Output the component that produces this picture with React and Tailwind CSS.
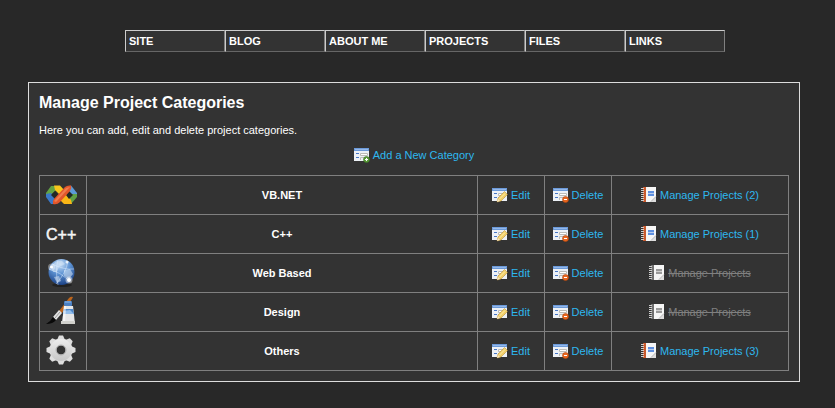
import React from "react";

const navItems = ["SITE", "BLOG", "ABOUT ME", "PROJECTS", "FILES", "LINKS"];

function VbIcon() {
  return (
    <svg width="32" height="32" viewBox="0 0 32 32" className="block">
      <path d="M5 7 H9 L11 10 L5 16 L0 16 V14 Z" fill="#63a345" />
      <path d="M0 15 L5 14 L11 20 L9 25 H5 L0 18 Z" fill="#3a78c8" />
      <path d="M8 6.500 H14 L19 12 L15 17 L9 11 Z" fill="#f8c61c" />
      <path d="M25 6.500 L31 14 V17 L27 17 L20 10 Z" fill="#5b9ad8" />
      <path d="M31 15 V18 L25 25 L20 21 L26 15 Z" fill="#5fa046" />
      <path d="M17 17 L20 15 L25 21 L26 25 H18 L13 20 Z" fill="#f9b616" />
      <path d="M5 16 L9 12 L12 16 L9 20 Z M20 16 L23 12 L27 16 L23 20 Z" fill="#232825" />
      <path d="M7 25 Q6 22 8 20 L19 8 Q21 6 25 6.500 Q26 9 24 12 L14 23 Q11 26 7 25 Z" fill="#e2562b" />
      <path d="M8 22 L20 9 L24 8 L10 23 Z" fill="#ef7b4e" />
    </svg>
  );
}

function CppIcon() {
  return (
    <svg width="32" height="32" viewBox="0 0 32 32" className="block">
      <text x="0" y="22" fontFamily="Liberation Sans, Arial, sans-serif" fontSize="16" fill="#f4f4f4" stroke="#f4f4f4" strokeWidth="0.5">C++</text>
    </svg>
  );
}

function GlobeIcon() {
  return (
    <svg width="32" height="32" viewBox="0 0 32 32" className="block">
      <defs>
        <radialGradient id="globe" cx="0.45" cy="0.2" r="0.85">
          <stop offset="0" stopColor="#c4dcf5" />
          <stop offset="0.45" stopColor="#5d92d2" />
          <stop offset="1" stopColor="#14397e" />
        </radialGradient>
      </defs>
      <ellipse cx="16" cy="28" rx="10" ry="2" fill="#222" />
      <circle cx="15.500" cy="15" r="13" fill="url(#globe)" />
      <path d="M5 9 Q10 3 16 4 L19 7 L13 10 L11 15 L7 15 Z M18 13 L24 12 L27 17 L23 22 L18 19 Z M8 20 L13 19 L15 24 L11 26 Z" fill="#d5e5f6" opacity="0.55" />
      <path d="M3 12 Q14 15 24 24 M6 7 Q18 13 28 12 M12 3 Q9 14 12 28 M22 4 Q20 16 10 27" fill="none" stroke="#e0efff" strokeWidth="0.6" opacity="0.8" />
      <circle cx="5.500" cy="10" r="3.500" fill="#fff" opacity="0.35" />
      <circle cx="5.500" cy="10" r="1.500" fill="#fff" />
      <circle cx="23" cy="23" r="3.500" fill="#fff" opacity="0.45" />
      <circle cx="23" cy="23" r="2" fill="#fff" />
      <circle cx="21" cy="5" r="1.500" fill="#fff" opacity="0.8" />
    </svg>
  );
}

function DesignIcon() {
  return (
    <svg width="32" height="32" viewBox="0 0 32 32" className="block">
      <path d="M13 15 L23 2 Q25 0 27 1 L26 3 L16 17 Z" fill="#bd651c" />
      <path d="M7 21 L13 14 L16 17 L10 24 Z" fill="#e2e2e2" />
      <path d="M9 22 L14 16" stroke="#999" />
      <path d="M7 21 L10 24 Q7 28 0 28 Q5 25 7 21 Z" fill="#090909" />
      <rect x="18" y="5" width="8" height="5" rx="1" fill="#4c80c2" />
      <path d="M19 6 H25" stroke="#8db7e8" />
      <path d="M18 10 H27 L29 28 H16 Z" fill="#e6e6e6" />
      <path d="M18 13 H27 L28 18 H17 Z" fill="#4d86c9" />
      <path d="M17 15 L24 14 L28 18 H17 Z" fill="#93bde9" />
      <path d="M18 10 H20 L19 28 H16 Z" fill="#fff" opacity="0.6" />
      <rect x="15" y="25" width="14" height="3" fill="#d0d0cc" />
    </svg>
  );
}

const gearTeeth = [0, 45, 90, 135, 180, 225, 270, 315];

function GearIcon() {
  return (
    <svg width="32" height="32" viewBox="0 0 32 32" className="block">
      <defs>
        <linearGradient id="gear" gradientUnits="userSpaceOnUse" x1="0" y1="0" x2="0" y2="31">
          <stop offset="0" stopColor="#f4f4f4" />
          <stop offset="1" stopColor="#bdbdbd" />
        </linearGradient>
      </defs>
      <circle cx="15" cy="15" r="8" fill="none" stroke="#e0e0e0" strokeWidth="7" />
      {gearTeeth.map((angle) => (
        <path key={angle} d="M11 5 L13 0.500 H17 L19 5 Z" fill="#dedede" transform={`rotate(${angle} 15 15)`} />
      ))}
      <circle cx="15" cy="15" r="8" fill="none" stroke="url(#gear)" strokeWidth="6" />
      <circle cx="15" cy="15" r="5" fill="none" stroke="#a5a5a5" strokeWidth="0.8" />
    </svg>
  );
}

function FormIcon({ kind }) {
  return (
    <svg width="16" height="16" viewBox="0 0 16 16" className="block shrink-0">
      <rect x="0" y="1" width="15" height="13" fill="#edf1f6" />
      <rect x="0" y="1" width="15" height="3" fill="#6c9ad9" />
      <rect x="1" y="2" width="13" height="1" fill="#94b8ea" />
      <path d="M2 6.500 H5 M2 10.500 H5" stroke="#4676c6" />
      <path d="M6.500 8.500 V6.500 H13.500 V8.500 H6.500 M6.500 13 V10.500 H13" fill="none" stroke="#bcbcb8" />
      <rect x="7" y="7" width="6" height="1" fill="#ffffff" />
      {kind === "edit" && (
        <g>
          <path d="M5 15 L6 11 L12.500 4.500 L15.500 7.500 L9 14 Z" fill="#f2cf68" stroke="#b58a30" strokeWidth="0.5" />
          <path d="M7.500 12 L13 6.500" stroke="#fff0ae" />
          <path d="M5 15 L6 12 L8 14 Z" fill="#f7e7c5" />
        </g>
      )}
      {kind === "delete" && (
        <g>
          <circle cx="12.500" cy="12.500" r="3" fill="#e8661f" stroke="#b5480e" strokeWidth="0.6" />
          <path d="M11 12.500 H14" stroke="#fff" />
        </g>
      )}
      {kind === "add" && (
        <g>
          <circle cx="12.500" cy="12.500" r="3" fill="#5b9a3a" stroke="#3d7a22" strokeWidth="0.6" />
          <path d="M11 12.500 H14 M12.500 11 V14" stroke="#fff" />
        </g>
      )}
    </svg>
  );
}

function NotebookIcon({ muted }) {
  const spine = muted ? "#6f6f6f" : "#c85a2e";
  const mark = muted ? "#9a9a9a" : "#5f90e0";
  return (
    <svg width="16" height="16" viewBox="0 0 16 16" className="block shrink-0">
      <rect x="2" y="0" width="3" height="15" fill={spine} />
      <rect x="5" y="0" width="10" height="15" fill="#f6f6f6" />
      <path d="M0 1.500 H3 M0 3.500 H3 M0 5.500 H3 M0 7.500 H3 M0 9.500 H3 M0 11.500 H3 M0 13.500 H3" stroke="#cfcfcf" />
      <rect x="7" y="4" width="6" height="2" fill={mark} />
      <rect x="7" y="6" width="6" height="1" fill={mark} opacity="0.4" />
      <rect x="7" y="7" width="6" height="2" fill={mark} />
      <path d="M9 15 L15 9 V15 Z" fill="#dedede" />
      <path d="M10 14.500 L15 9.500" stroke="#aaaaaa" strokeWidth="0.7" />
    </svg>
  );
}

const categories = [
  { name: "VB.NET", Icon: VbIcon, count: 2 },
  { name: "C++", Icon: CppIcon, count: 1 },
  { name: "Web Based", Icon: GlobeIcon, count: 0 },
  { name: "Design", Icon: DesignIcon, count: 0 },
  { name: "Others", Icon: GearIcon, count: 3 },
];

function IconLink({ icon, children }) {
  return (
    <a href="#" className="flex items-center justify-center gap-[3px] text-[#2eb8f0]">
      {icon}
      <span>{children}</span>
    </a>
  );
}

export default function App() {
  return (
    <div className="min-h-screen bg-[#282828] pt-[30px] pb-6 font-['Liberation_Sans',Arial,sans-serif] text-[11px] leading-4 text-white">
      <nav className="flex justify-center pl-[15px]">
        <ul className="grid w-[600px] grid-cols-6">
          {navItems.map((item) => (
            <li key={item}>
              <a
                href="#"
                className="block border border-t-[#cccccc] border-r-[#808080] border-b-[#666666] border-l-[#cccccc] bg-[#333333] px-[3px] py-[2px] font-bold"
              >
                {item}
              </a>
            </li>
          ))}
        </ul>
      </nav>
      <main className="mt-[30px] mr-[35px] ml-7 border border-[#dddddd] bg-[#333333] p-[10px]">
        <h1 className="text-base leading-5 font-bold">Manage Project Categories</h1>
        <p className="mt-[9px]">Here you can add, edit and delete project categories.</p>
        <div className="mt-[9px] flex justify-center">
          <IconLink icon={<FormIcon kind="add" />}>Add a New Category</IconLink>
        </div>
        <table className="mt-3 w-full table-fixed border-collapse text-center [&_td]:border [&_td]:border-[#808080] [&_th]:border [&_th]:border-[#808080]">
          <colgroup>
            <col className="w-[47px]" />
            <col />
            <col className="w-[67px]" />
            <col className="w-[67px]" />
            <col className="w-[177px]" />
          </colgroup>
          <tbody>
            {categories.map(({ name, Icon, count }) => (
              <tr key={name} className="h-[39px]">
                <td className="pl-[6px]">
                  <Icon />
                </td>
                <th scope="row" className="font-bold">{name}</th>
                <td>
                  <IconLink icon={<FormIcon kind="edit" />}>Edit</IconLink>
                </td>
                <td>
                  <IconLink icon={<FormIcon kind="delete" />}>Delete</IconLink>
                </td>
                <td>
                  {count > 0 ? (
                    <IconLink icon={<NotebookIcon />}>Manage Projects ({count})</IconLink>
                  ) : (
                    <span className="flex items-center justify-center gap-[3px] text-[#808080]">
                      <NotebookIcon muted />
                      <s>Manage Projects</s>
                    </span>
                  )}
                </td>
              </tr>
            ))}
          </tbody>
        </table>
      </main>
    </div>
  );
}
